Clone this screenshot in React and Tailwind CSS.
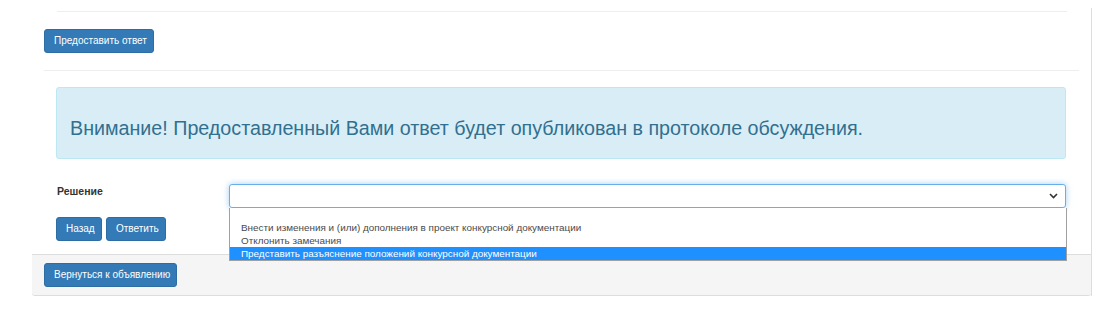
import React from "react";

const font = { fontFamily: '"Liberation Sans", Arial, sans-serif' };

const Btn = ({ children, className = "" }) => (
  <button
    className={`h-[24px] px-[9px] bg-[#337ab7] border border-[#2e6da4] rounded-[3px] text-white text-[10px] leading-none whitespace-nowrap ${className}`}
  >
    {children}
  </button>
);

const options = [
  "",
  "Внести изменения и (или) дополнения в проект конкурсной документации",
  "Отклонить замечания",
  "Представить разъяснение положений конкурсной документации",
];

export default function App() {
  return (
    <div className="w-[1111px] h-[315px] bg-white overflow-hidden pt-[8px]" style={font}>
      <div className="ml-[32px] w-[1060px] border-r border-[#dddddd]">
        <div className="px-[12px] pt-[3px]">
          <div className="ml-[13px] mr-[12px] border-t border-[#eeeeee]" />
          <div className="mt-[17px] flex">
            <Btn className="w-[110px] px-0">Предоставить ответ</Btn>
          </div>
          <div className="mt-[17px] border-t border-[#eeeeee]" />

          {/* alert */}
          <div className="ml-[12px] mr-[13px] mt-[16px] h-[72px] bg-[#d9edf7] border border-[#bce8f1] rounded-[3px] flex items-center pl-[13px]">
            <span className="text-[19.7px] text-[#31708f] mt-[12px] whitespace-nowrap">
              Внимание! Предоставленный Вами ответ будет опубликован в протоколе обсуждения.
            </span>
          </div>

          {/* select row */}
          <div className="ml-[12px] mr-[13px] mt-[25px] flex items-start">
            <div className="w-[173px] pl-[1px] text-[10.5px] leading-[14px] font-bold text-[#333333]">
              Решение
            </div>
            <div className="relative flex-1">
              <div className="h-[24px] bg-white border border-[#66afe9] rounded-[3px] shadow-[0_0_6px_rgba(102,175,233,0.6)] flex items-center justify-end pr-[7px]">
                <svg width="9" height="6" viewBox="0 0 9 6" fill="none">
                  <path d="M1 1l3.5 3.5L8 1" stroke="#333" strokeWidth="1.6" />
                </svg>
              </div>
              <div className="absolute left-0 right-[-1px] top-[24px] z-10 bg-white border border-[#a0a0a0] border-t-0">
                {options.map((o, i) => (
                  <div
                    key={i}
                    className={`h-[13px] pl-[11px] text-[9.9px] leading-[13px] whitespace-nowrap ${
                      i === 3 ? "bg-[#1e90ff] text-white" : "text-[#4a4a4a]"
                    }`}
                  >
                    {o}
                  </div>
                ))}
              </div>
            </div>
          </div>

          <div className="ml-[12px] mt-[9px] flex gap-[4px]">
            <Btn className="w-[46px] px-0">Назад</Btn>
            <Btn className="w-[60px] px-0">Ответить</Btn>
          </div>
        </div>

        {/* footer */}
        <div className="mt-[13px] bg-[#f5f5f5] border-t border-b border-[#dddddd] px-[12px] py-[8px] rounded-b-[3px] flex">
          <Btn className="w-[133px] px-0">Вернуться к объявлению</Btn>
        </div>
      </div>
    </div>
  );
}
